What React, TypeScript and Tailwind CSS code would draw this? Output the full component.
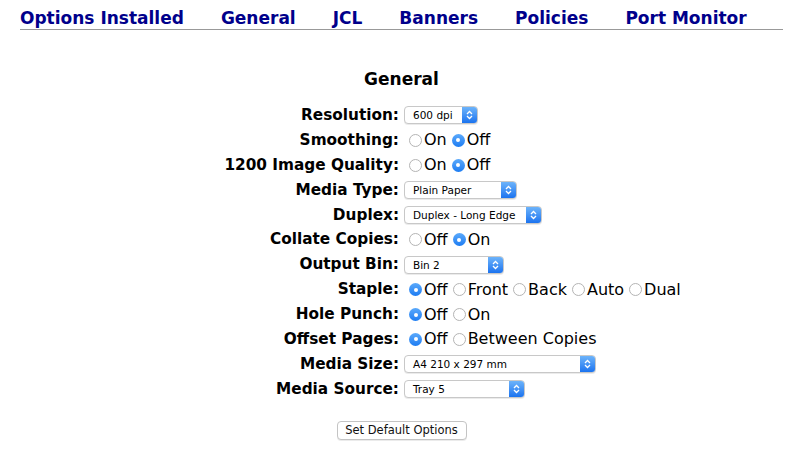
import { useState } from 'react';

const tabs = ['Options Installed', 'General', 'JCL', 'Banners', 'Policies', 'Port Monitor'];

type Row =
  | { label: string; kind: 'select'; value: string; width: string }
  | { label: string; kind: 'radio'; options: string[]; checked: string };

const rows: Row[] = [
  { label: 'Resolution:', kind: 'select', value: '600 dpi', width: 'w-[74px]' },
  { label: 'Smoothing:', kind: 'radio', options: ['On', 'Off'], checked: 'Off' },
  { label: '1200 Image Quality:', kind: 'radio', options: ['On', 'Off'], checked: 'Off' },
  { label: 'Media Type:', kind: 'select', value: 'Plain Paper', width: 'w-[113px]' },
  { label: 'Duplex:', kind: 'select', value: 'Duplex - Long Edge', width: 'w-[138px]' },
  { label: 'Collate Copies:', kind: 'radio', options: ['Off', 'On'], checked: 'On' },
  { label: 'Output Bin:', kind: 'select', value: 'Bin 2', width: 'w-[100px]' },
  { label: 'Staple:', kind: 'radio', options: ['Off', 'Front', 'Back', 'Auto', 'Dual'], checked: 'Off' },
  { label: 'Hole Punch:', kind: 'radio', options: ['Off', 'On'], checked: 'Off' },
  { label: 'Offset Pages:', kind: 'radio', options: ['Off', 'Between Copies'], checked: 'Off' },
  { label: 'Media Size:', kind: 'select', value: 'A4 210 x 297 mm', width: 'w-[192px]' },
  { label: 'Media Source:', kind: 'select', value: 'Tray 5', width: 'w-[121px]' },
];

function Radio({ on }: { on: boolean }) {
  return on ? (
    <span className="inline-flex h-[13px] w-[13px] shrink-0 items-center justify-center rounded-full bg-gradient-to-b from-[#5aa9fb] to-[#1b7cf2]">
      <span className="h-[4px] w-[4px] rounded-full bg-white" />
    </span>
  ) : (
    <span className="inline-block h-[13px] w-[13px] shrink-0 rounded-full border border-[#b4b4b4] bg-white" />
  );
}

function Select({ value, width }: { value: string; width: string }) {
  return (
    <div className={`flex h-[18px] items-stretch overflow-hidden rounded-[4px] border border-[#c8c8c8] bg-white shadow-[0_1px_0_rgba(0,0,0,0.08)] ${width}`}>
      <span className="flex-1 truncate pl-[8px] text-[10.5px] leading-[16px] text-black">{value}</span>
      <span className="flex w-[15px] items-center justify-center bg-gradient-to-b from-[#6cb3fa] to-[#1a73ef]">
        <svg width="7" height="10" viewBox="0 0 7 10" fill="none" stroke="white" strokeWidth="1.3">
          <path d="M1 4 L3.5 1.5 L6 4" />
          <path d="M1 6 L3.5 8.5 L6 6" />
        </svg>
      </span>
    </div>
  );
}

export default function App() {
  const [tab] = useState('General');
  return (
    <div className="h-[452px] w-[803px] bg-white font-['DejaVu_Sans',sans-serif] text-black">
      <div className="mx-[20px] flex gap-[37px] border-b border-[#999] pb-[1px] pt-[8px]">
        {tabs.map(t => (
          <span key={t} className={`text-[17px] font-bold leading-[20px] ${t === tab ? 'text-[#00008b]' : 'text-[#00008b]'}`}>
            {t}
          </span>
        ))}
      </div>

      <h2 className="mt-[38px] text-center text-[17px] font-bold leading-[22px]">General</h2>

      <div className="mt-[13px] grid grid-cols-[1fr_1fr] gap-x-[5px]">
        {rows.map(r => (
          <div key={r.label} className="contents">
            <div className="flex h-[24.9px] items-center justify-end text-[15.3px] font-bold">{r.label}</div>
            <div className="flex h-[24.9px] items-center">
              {r.kind === 'select' ? (
                <Select value={r.value} width={r.width} />
              ) : (
                <div className="flex items-center gap-[5px] pl-[5px] text-[16px]">
                  {r.options.map(o => (
                    <label key={o} className="flex items-center gap-[2px]">
                      <Radio on={o === r.checked} />
                      <span>{o}</span>
                    </label>
                  ))}
                </div>
              )}
            </div>
          </div>
        ))}
      </div>

      <div className="mt-[19px] flex justify-center">
        <button className="h-[19px] w-[130px] rounded-[4px] border border-[#c4c4c4] bg-white text-[11.5px] leading-[17px] text-[#111] shadow-[0_1px_0_rgba(0,0,0,0.08)]">
          Set Default Options
        </button>
      </div>
    </div>
  );
}
